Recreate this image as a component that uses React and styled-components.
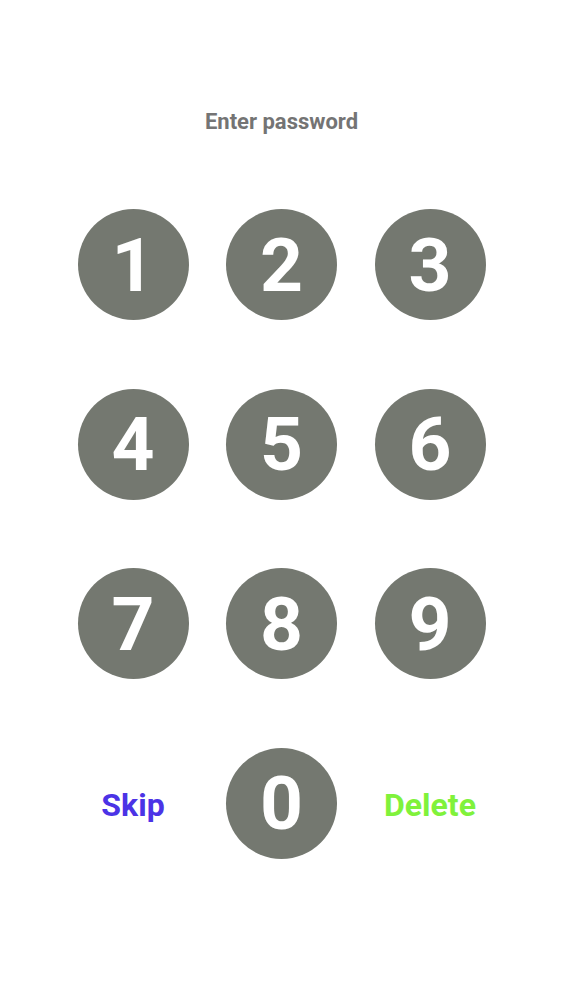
import React from 'react';
import styled, { createGlobalStyle } from 'styled-components';

const GlobalStyle = createGlobalStyle`
  html, body {
    margin: 0;
    padding: 0;
    background: #ffffff;
    font-family: Roboto, "Liberation Sans", sans-serif;
  }
`;

const Screen = styled.div`
  width: 563px;
  height: 1000px;
  display: flex;
  flex-direction: column;
  align-items: center;
  padding-top: 109px;
  box-sizing: border-box;
`;

const Title = styled.h1`
  margin: 0;
  font-size: 22px;
  line-height: 26px;
  font-weight: 700;
  color: #747474;
`;

const Pad = styled.div`
  margin-top: 74px;
  display: grid;
  grid-template-columns: repeat(3, 111px);
  grid-auto-rows: 111px;
  column-gap: 37.5px;
  row-gap: 68.5px;
`;

const Key = styled.button`
  width: 111px;
  height: 111px;
  border: none;
  border-radius: 50%;
  background: #747870;
  color: #ffffff;
  font-family: Roboto, "Liberation Sans", sans-serif;
  font-size: 75px;
  font-weight: 700;
  display: flex;
  align-items: center;
  justify-content: center;
  padding: 0;
  cursor: pointer;
`;

const TextKey = styled.button`
  border: none;
  background: none;
  padding: 0;
  padding-top: 3px;
  font-family: Roboto, "Liberation Sans", sans-serif;
  font-size: 32px;
  font-weight: 700;
  color: ${props => props.color};
  display: flex;
  align-items: center;
  justify-content: center;
  cursor: pointer;
`;

const digits = ['1', '2', '3', '4', '5', '6', '7', '8', '9'];

function App() {
  return (
    <>
      <GlobalStyle />
      <Screen>
        <Title>Enter password</Title>
        <Pad>
          {digits.map((d) => (
            <Key key={d}>{d}</Key>
          ))}
          <TextKey color="#4b33e6">Skip</TextKey>
          <Key>0</Key>
          <TextKey color="#80f23b">Delete</TextKey>
        </Pad>
      </Screen>
    </>
  );
}

export default App;
